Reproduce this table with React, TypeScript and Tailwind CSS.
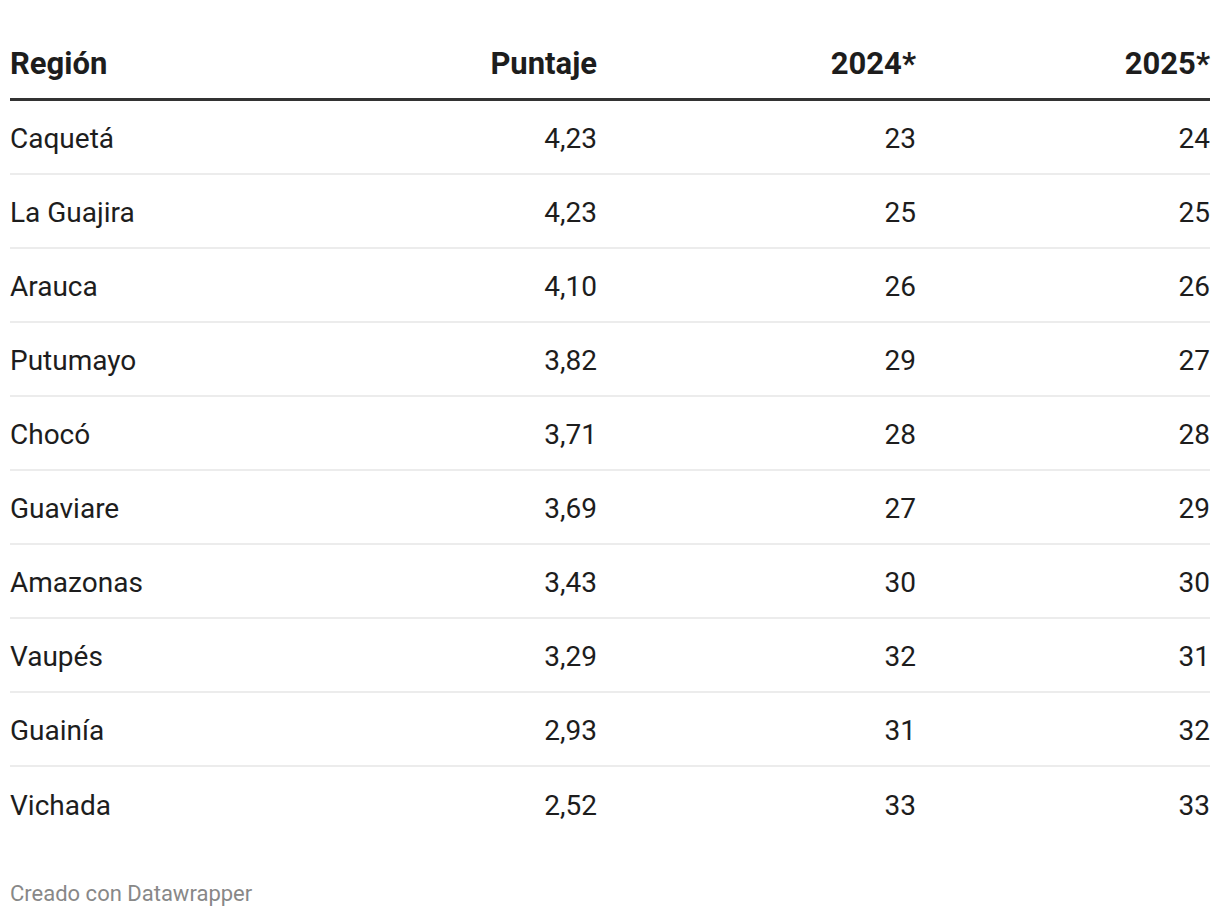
const rows: [string, string, string, string][] = [
  ["Caquetá", "4,23", "23", "24"],
  ["La Guajira", "4,23", "25", "25"],
  ["Arauca", "4,10", "26", "26"],
  ["Putumayo", "3,82", "29", "27"],
  ["Chocó", "3,71", "28", "28"],
  ["Guaviare", "3,69", "27", "29"],
  ["Amazonas", "3,43", "30", "30"],
  ["Vaupés", "3,29", "32", "31"],
  ["Guainía", "2,93", "31", "32"],
  ["Vichada", "2,52", "33", "33"],
];

export default function App() {
  return (
    <div
      className="min-h-screen bg-white px-[10px] pt-[48px] text-[#1d1d1d]"
      style={{ fontFamily: "Roboto, 'Liberation Sans', sans-serif" }}
    >
      <div className="grid grid-cols-[287px_300px_319px_294px] border-b-[3px] border-[#333333] pb-[18px] text-[31px] font-bold leading-[32px]">
        <div>Región</div>
        <div className="text-right">Puntaje</div>
        <div className="text-right">2024*</div>
        <div className="text-right">2025*</div>
      </div>

      {rows.map((r, i) => (
        <div
          key={r[0]}
          className={`grid h-[74px] grid-cols-[287px_300px_319px_294px] items-center pt-[3px] text-[28px] ${
            i < rows.length - 1 ? "border-b-2 border-[#ececec]" : ""
          }`}
        >
          <div>{r[0]}</div>
          <div className="text-right">{r[1]}</div>
          <div className="text-right">{r[2]}</div>
          <div className="text-right">{r[3]}</div>
        </div>
      ))}

      <div className="mt-[36px] text-[22px] text-[#888888]">Creado con Datawrapper</div>
    </div>
  );
}
